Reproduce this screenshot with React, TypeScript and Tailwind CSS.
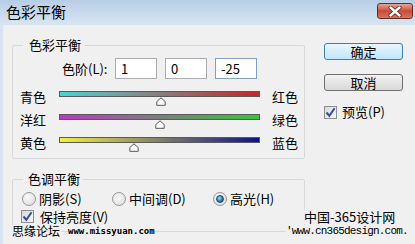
import React from "react";

const bars = [
  { left: "青色", right: "红色", from: "#46d6d8", to: "#cc2424", value: 1 },
  { left: "洋红", right: "绿色", from: "#c434c8", to: "#34c834", value: 0 },
  { left: "黄色", right: "蓝色", from: "#f2f044", to: "#10108e", value: -25 },
];

const BAR_W = 201;

function Thumb({ value }: { value: number }) {
  const x = ((value + 100) / 200) * BAR_W;
  return (
    <svg
      width="10"
      height="9"
      viewBox="0 0 10 9"
      className="absolute top-[8px]"
      style={{ left: x - 5 }}
    >
      <path d="M5 0.8 L9.2 4.6 L9.2 8.3 L0.8 8.3 L0.8 4.6 Z" fill="#fff" stroke="#555" strokeWidth="1" strokeLinejoin="round" />
    </svg>
  );
}

function CheckBox() {
  return (
    <div className="w-[13px] h-[13px] border border-[#8e8f8f] bg-gradient-to-br from-[#d6d9de] to-[#f7f7f7] flex items-center justify-center">
      <svg width="11" height="11" viewBox="0 0 11 11">
        <path d="M1.5 5.5 L4.3 8.8 L9.6 1.2" fill="none" stroke="#3a4f8e" strokeWidth="2" />
      </svg>
    </div>
  );
}

function Radio({ checked }: { checked?: boolean }) {
  return (
    <div className="w-[14px] h-[14px] rounded-full border border-[#979797] bg-[radial-gradient(circle_at_40%_35%,#fbfbfb,#d8d8d8)] flex items-center justify-center">
      {checked && (
        <div className="w-[8px] h-[8px] rounded-full border border-[#1d4660] bg-[radial-gradient(circle_at_40%_35%,#9fe0f8,#2a78a6_60%,#164a68)]" />
      )}
    </div>
  );
}

export default function App() {
  return (
    <div className="relative w-[415px] h-[244px] overflow-hidden bg-[#f0f0f0] text-[13px] text-black font-['Noto_Sans_CJK_SC',sans-serif]">
      {/* title bar */}
      <div className="h-[25px] flex items-start justify-between pl-[6px] pr-[2px] bg-gradient-to-b from-[#b8cde6] to-[#d9e5f2]">
        <span className="text-[15px] leading-[24px]">色彩平衡</span>
        <div className="mt-[3px] w-[36px] h-[16px] rounded-[3px] border border-[#6b2a22] bg-gradient-to-b from-[#e6a596] via-[#c84a38] to-[#d77462] flex items-center justify-center">
          <svg width="14" height="11" viewBox="0 0 14 11">
            <path d="M2.5 1.5 L11.5 9.5 M11.5 1.5 L2.5 9.5" stroke="#5a1e18" strokeWidth="4" strokeLinecap="round" />
            <path d="M2.5 1.5 L11.5 9.5 M11.5 1.5 L2.5 9.5" stroke="#fff" strokeWidth="2.4" strokeLinecap="round" />
          </svg>
        </div>
      </div>

      {/* body */}
      <div className="flex border-l-[3px] border-[#d7e3f0] pl-[9px] h-[219px]">
        <div className="w-[293px] pt-[11px]">
          <fieldset className="border border-[#d5d9dc] rounded-[2px]">
            <legend className="ml-[10px] pl-[6px] pr-[3px] leading-[18px]">色彩平衡</legend>
            <div className="pt-[4px]">
              <div className="flex items-center h-[21px] pl-[49px]">
                <span className="w-[53px] leading-[16px]">色阶(L):</span>
                <div className="flex gap-[8px]">
                  <div className="w-[42px] h-[21px] border border-[#abadb3] bg-white pl-[5px] leading-[19px]">1</div>
                  <div className="w-[42px] h-[21px] border border-[#abadb3] bg-white pl-[5px] leading-[19px]">0</div>
                  <div className="w-[42px] h-[21px] border border-[#7fa2c4] bg-white pl-[5px] leading-[19px]">-25</div>
                </div>
              </div>
              <div className="mt-[10px]">
                {bars.map((b) => (
                  <div key={b.left} className="flex items-start h-[23px] pl-[7px]">
                    <span className="w-[39px] leading-[16px]">{b.left}</span>
                    <div className="relative w-[201px] pt-[2px]">
                      <div
                        className="h-[6px] border border-[#5a5a5a]"
                        style={{ background: `linear-gradient(90deg, ${b.from}, ${b.to})` }}
                      />
                      <Thumb value={b.value} />
                    </div>
                    <span className="ml-[12px] leading-[16px]">{b.right}</span>
                  </div>
                ))}
              </div>
            </div>
          </fieldset>

          <fieldset className="mt-[11px] border border-[#d5d9dc] rounded-[2px]">
            <legend className="ml-[10px] pl-[5px] pr-[3px] leading-[18px]">色调平衡</legend>
            <div className="pt-[4px] pb-[8px]">
              <div className="flex items-center h-[14px] pl-[9px]">
                <label className="w-[90px] flex items-center gap-[3px]">
                  <Radio />
                  <span className="leading-[14px]">阴影(S)</span>
                </label>
                <label className="w-[101px] flex items-center gap-[3px]">
                  <Radio />
                  <span className="leading-[14px]">中间调(D)</span>
                </label>
                <label className="flex items-center gap-[3px]">
                  <Radio checked />
                  <span className="leading-[14px]">高光(H)</span>
                </label>
              </div>
              <div className="mt-[4px] flex items-center h-[13px] pl-[8px] gap-[6px]">
                <CheckBox />
                <span className="leading-[13px]">保持亮度(V)</span>
              </div>
            </div>
          </fieldset>
        </div>

        <div className="ml-[19px] pt-[18px] w-[79px] flex flex-col">
          <button className="h-[17px] rounded-[3px] border border-[#3c7fb1] bg-gradient-to-b from-[#eaf6fd] to-[#bee6fd] text-[13px] leading-[15px]">
            确定
          </button>
          <button className="mt-[14px] h-[17px] rounded-[3px] border border-[#707070] bg-gradient-to-b from-[#f2f2f2] to-[#d9d9d9] text-[13px] leading-[15px]">
            取消
          </button>
          <div className="mt-[13px] flex items-center gap-[5px]">
            <CheckBox />
            <span className="leading-[16px]">预览(P)</span>
          </div>
        </div>
      </div>

      {/* watermarks */}
      <span className="absolute left-[12px] top-[225px] bg-[#f0f0f0] text-[12px] leading-[12px] pr-[1px]">思缘论坛</span>
      <span className="absolute left-[68px] top-[226px] bg-[#f0f0f0] leading-[10px] text-[9px] font-bold font-['DejaVu_Sans_Mono',monospace]">
        www.missyuan.com
      </span>
      <span className="absolute left-[304px] top-[210px] bg-[#f0f0f0] leading-[14px] text-[13px] pr-[4px]">中国-365设计网</span>
      <span className="absolute left-[286px] top-[225px] bg-[#f0f0f0] leading-[12px] text-[11px] tracking-[-0.8px] font-['Liberation_Mono',monospace]">
        'www.cn365design.com.
      </span>
    </div>
  );
}
